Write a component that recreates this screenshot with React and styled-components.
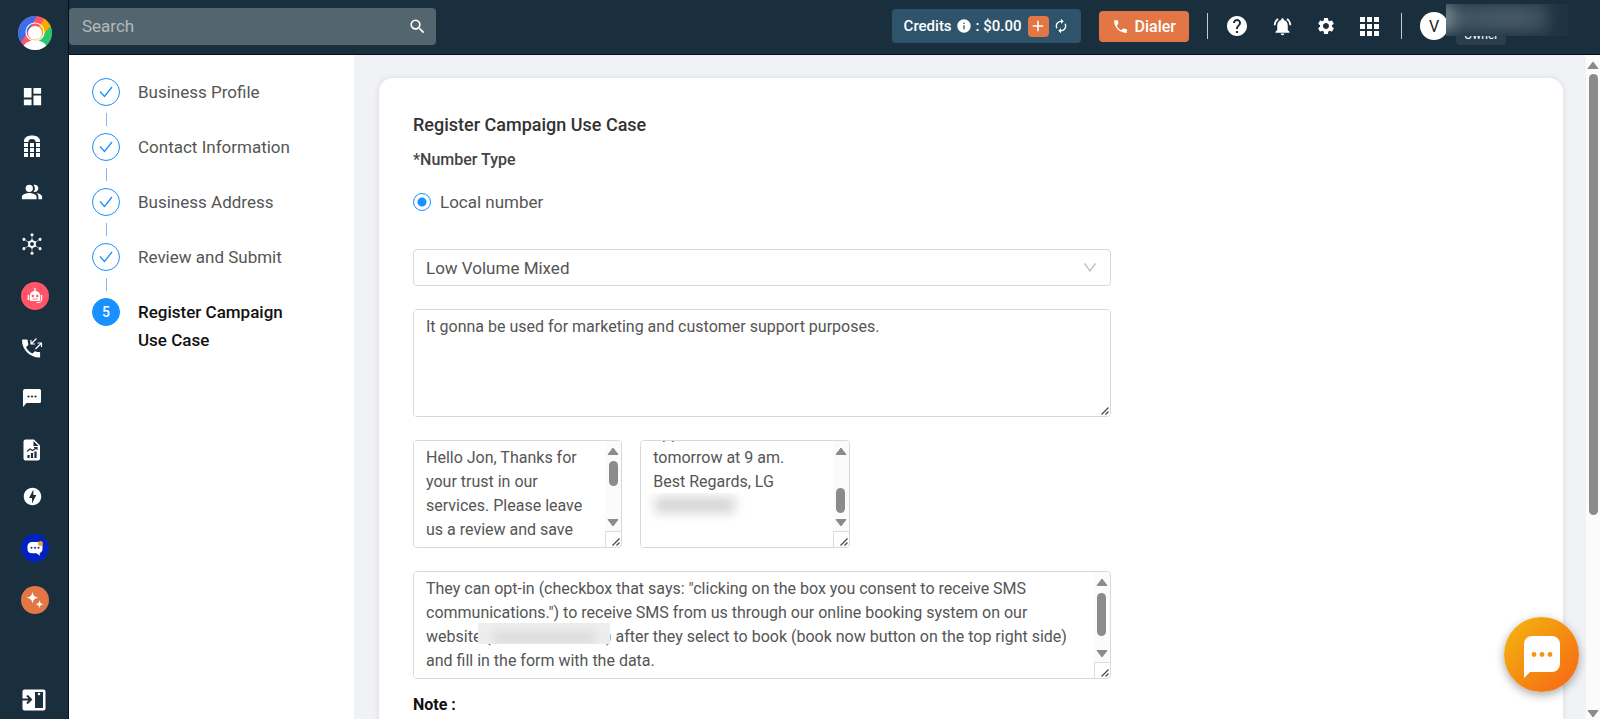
import { useEffect, useRef, useState } from "react";
import styled, { createGlobalStyle } from "styled-components";
import {
  MdAdd,
  MdAutorenew,
  MdDashboard,
  MdHelp,
  MdInfo,
  MdNotificationsActive,
  MdOfflineBolt,
  MdPeopleAlt,
  MdPhone,
  MdSearch,
  MdSettings,
} from "react-icons/md";

const steps = [
  { title: "Business Profile", done: true },
  { title: "Contact Information", done: true },
  { title: "Business Address", done: true },
  { title: "Review and Submit", done: true },
  { title: "Register Campaign Use Case", done: false },
];

const blank = "\u00a0".repeat(29);

const optInText =
  'They can opt-in (checkbox that says: "clicking on the box you consent to receive SMS communications.") to receive SMS from us through our online booking system on our website (' +
  blank +
  ") after they select to book (book now button on the top right side) and fill in the form with the data.";

const DeskPhoneIcon = () => (
  <svg width="18" height="22" viewBox="0 0 18 22" fill="#fff">
    <path d="M1 7C.5 2.500 4.500 0.500 9 0.500s8.500 2 8 6.500h-4.500c0-2-1-3-3.500-3s-3.500 1-3.500 3z" />
    {[8, 13, 18].map((y) =>
      [1, 7, 13].map((x) => <rect key={x + "-" + y} x={x} y={y} width="4" height="4" />)
    )}
  </svg>
);

const NetworkIcon = () => (
  <svg width="22" height="22" viewBox="0 0 22 22" fill="none" stroke="#fff">
    {[0, 60, 120, 180, 240, 300].map((a) => (
      <g key={a} transform={`rotate(${a} 11 11)`}>
        <path d="M11 7V2" strokeWidth="0.5" />
        <circle cx="11" cy="1.700" r="1.500" fill="#fff" stroke="none" />
        <path d="M11 8V6.500" strokeWidth="2" />
      </g>
    ))}
    <circle cx="11" cy="11" r="2.900" strokeWidth="1.900" />
  </svg>
);

const RobotIcon = () => (
  <svg width="28" height="28" viewBox="0 0 28 28">
    <circle cx="14" cy="14" r="14" fill="#ff5566" />
    <path d="M14 6v4" stroke="#fff" strokeWidth="1.400" />
    <path
      d="M9 18v-4.500c0-3 2-4.500 5-4.500s5 1.500 5 4.500V18c0 .6-.4 1-1 1h-8c-.6 0-1-.4-1-1z"
      fill="#fff"
    />
    <path d="M7.500 13v5M20.500 13v5" stroke="#fff" strokeWidth="1.600" />
    <path d="M20.500 18c0 2-1.500 2.600-5 2.600" fill="none" stroke="#fff" strokeWidth="1" />
    <circle cx="11.800" cy="14" r="1.200" fill="#ff5566" />
    <circle cx="16.200" cy="14" r="1.200" fill="#ff5566" />
    <path d="M11.500 17h5" stroke="#ff5566" strokeWidth="0.800" />
  </svg>
);

const CallsIcon = () => (
  <svg width="22" height="22" viewBox="0 0 22 22" fill="none">
    <path
      d="M2 2.500h3.700c.6 0 1 .4 1 1 0 1.300.2 2.500.6 3.600.1.400 0 .8-.3 1.100L5 10.200c1.400 2.800 3.700 5 6.500 6.400l2-2c.300-.3.700-.4 1.100-.2 1.100.4 2.300.6 3.500.6.600 0 1 .4 1 1v3.500c0 .6-.4 1-1 1C9 20.500 1 12.500 1 3.500c0-.6.400-1 1-1z"
      fill="#fff"
    />
    <path d="M15.500 1.500L10 7M10 3v4h4" stroke="#fff" strokeWidth="1.200" />
    <path d="M14.500 12l6-6M16.500 6h4v4" stroke="#fff" strokeWidth="1.200" />
  </svg>
);

const SmsIcon = () => (
  <svg width="20" height="20" viewBox="0 0 20 20">
    <path d="M3 1h14.500A1.500 1.500 0 0 1 19 2.500v11a1.500 1.500 0 0 1-1.500 1.500H4.500L1 19V3a2 2 0 0 1 2-2z" fill="#fff" />
    <circle cx="6.500" cy="8.500" r="1.100" fill="#1a2f3d" />
    <circle cx="10" cy="8.500" r="1.100" fill="#1a2f3d" />
    <circle cx="13.500" cy="8.500" r="1.100" fill="#1a2f3d" />
  </svg>
);

const ReportIcon = () => (
  <svg width="18" height="22" viewBox="0 0 18 22">
    <path d="M2.500.500H11l6 6v13a2 2 0 0 1-2 2H2.500a2 2 0 0 1-2-2v-17a2 2 0 0 1 2-2z" fill="#fff" />
    <path d="M10.500 2v5h5z" fill="#1a2f3d" />
    <path d="M5.500 19v-3M9 19v-5M12.500 19v-6.500" stroke="#1a2f3d" strokeWidth="2.200" />
    <path d="M4 12.500l3-2.500 2.500 1.500L13.500 9M11 8.600h3v2.500" fill="none" stroke="#1a2f3d" strokeWidth="1.100" />
  </svg>
);

const BubbleIcon = () => (
  <svg width="28" height="28" viewBox="0 0 28 28">
    <circle cx="14" cy="14" r="14" fill="#0022c4" />
    <path
      d="M11 8h6.500c2.300 0 4 1.800 4 4v3.300c0 1.800-1.200 3.200-2.900 3.700l.4 2.700-3.500-2.500H11c-2.500 0-4.500-1.500-4.500-4v-3.200c0-2.200 2-4 4.500-4z"
      fill="#fff"
    />
    <circle cx="10.500" cy="13.700" r="1" fill="#0022c4" />
    <circle cx="14" cy="13.700" r="1" fill="#0022c4" />
    <circle cx="17.500" cy="13.700" r="1" fill="#0022c4" />
    <circle cx="19.500" cy="9.500" r="2.500" fill="#f59a23" />
  </svg>
);

const SparkleIcon = () => (
  <svg width="28" height="28" viewBox="0 0 28 28">
    <circle cx="14" cy="14" r="14" fill="#e27645" />
    <path d="M11.500 5.500c.7 4.300 1.700 5.300 6 6.200-4.300.8-5.300 1.800-6 6.100-.7-4.300-1.700-5.300-6-6.100 4.300-.9 5.300-1.900 6-6.200z" fill="#fff" />
    <path d="M18.500 14c.5 3 1.200 3.700 4.200 4.300-3 .5-3.700 1.200-4.200 4.200-.5-3-1.200-3.700-4.200-4.200 3-.6 3.700-1.300 4.200-4.300z" fill="#fff" />
  </svg>
);

const ExpandIcon = () => (
  <svg width="24" height="22" viewBox="0 0 24 22">
    <rect x="0.500" y="0.500" width="23" height="21" rx="2" fill="#fff" />
    <path d="M0 10.500h8M5 6.500l4 4-4 4" fill="none" stroke="#1a2f3d" strokeWidth="2" />
    <rect x="13" y="3" width="8" height="16" fill="#1a2f3d" />
    <circle cx="17" cy="5" r="1.300" fill="#fff" />
  </svg>
);

const LogoIcon = () => (
  <svg width="34" height="34" viewBox="0 0 34 34">
    <defs>
      <clipPath id="logo-round">
        <circle cx="17" cy="17" r="17" />
      </clipPath>
    </defs>
    <g clipPath="url(#logo-round)">
      <rect width="34" height="34" fill="#ff5566" />
      <path d="M0 0h19L2 28H0z" fill="#3a6fe8" />
      <path d="M28 0h6v12L20 27l-8-3z" fill="#ffa800" />
      <path d="M34 8v26H20l-2-6z" fill="#28c76f" />
      <path d="M5 34c0-6 4-9.500 12-9.500S29 28 29 34z" fill="#fff" />
      <circle cx="17" cy="16" r="9" fill="none" stroke="#fff" strokeWidth="1.200" />
      <circle cx="17" cy="17" r="7" fill="#fff" />
      <path d="M15 23.500h6" stroke="#ffd9a8" strokeWidth="1.500" />
    </g>
  </svg>
);

const GridIcon = () => (
  <svg width="20" height="20" viewBox="0 0 20 20" fill="#fff">
    {[1, 8, 15].map((y) =>
      [1, 8, 15].map((x) => <rect key={x + "-" + y} x={x} y={y} width="5" height="5" />)
    )}
  </svg>
);

const ChatIcon = () => (
  <svg width="36" height="42" viewBox="0 0 36 42">
    <path d="M8 0h20a8 8 0 0 1 8 8v20a8 8 0 0 1-8 8H6l-6 6V8a8 8 0 0 1 8-8z" fill="#fff" />
    <circle cx="10" cy="18.500" r="2.400" fill="#f5960f" />
    <circle cx="18" cy="18.500" r="2.400" fill="#f5960f" />
    <circle cx="26" cy="18.500" r="2.400" fill="#f5960f" />
  </svg>
);

const CheckIcon = () => (
  <svg width="14" height="12" viewBox="0 0 14 12" fill="none">
    <path d="M1 5.500L5.500 10.500 13 1" stroke="#1890ff" strokeWidth="1.300" />
  </svg>
);

const ArrowUp = () => (
  <svg width="12" height="8" viewBox="0 0 12 8">
    <path d="M6 1L11 7.500H1z" fill="#8b8b8b" stroke="#8b8b8b" strokeLinejoin="round" />
  </svg>
);

const ArrowDown = () => (
  <svg width="12" height="8" viewBox="0 0 12 8">
    <path d="M6 7L11 .500H1z" fill="#8b8b8b" stroke="#8b8b8b" strokeLinejoin="round" />
  </svg>
);

const ResizeGrip = () => (
  <svg width="8" height="8" viewBox="0 0 8 8">
    <path d="M.500 7.500l7-7M4.500 7.500l3-3" stroke="#444" strokeWidth="1.200" />
  </svg>
);

const nav = [
  { label: "Dashboard", icon: <MdDashboard size={23} />, gap: 0 },
  { label: "Phone system", icon: <DeskPhoneIcon />, gap: 26 },
  { label: "Contacts", icon: <MdPeopleAlt size={22} />, gap: 22 },
  { label: "Integrations", icon: <NetworkIcon />, gap: 28 },
  { label: "AI agent", icon: <RobotIcon />, gap: 26 },
  { label: "Calls", icon: <CallsIcon />, gap: 26 },
  { label: "Messages", icon: <SmsIcon />, gap: 26 },
  { label: "Reports", icon: <ReportIcon />, gap: 28 },
  { label: "Automation", icon: <MdOfflineBolt size={21} />, gap: 22 },
  { label: "Live chat", icon: <BubbleIcon />, gap: 26 },
  { label: "AI tools", icon: <SparkleIcon />, gap: 24 },
];

// rows = space before thumb, thumb, space after thumb
const ScrollRail = ({ rows, wide }) => (
  <Rail $wide={wide} aria-hidden="true">
    <ArrowUp />
    <Track $rows={rows}>
      <Thumb />
    </Track>
    <ArrowDown />
  </Rail>
);

const MessageField = ({ label, text, rows, scroll, children }) => {
  const [value, setValue] = useState(text);
  const area = useRef(null);

  useEffect(() => {
    if (scroll) area.current.scrollTop = scroll;
  }, [scroll]);

  return (
    <Field>
      <TextArea
        ref={area}
        aria-label={label}
        value={value}
        onChange={(e) => setValue(e.target.value)}
        spellCheck={false}
      />
      {rows ? (
        <Side>
          <ScrollRail rows={rows} />
          <Corner>
            <ResizeGrip />
          </Corner>
        </Side>
      ) : (
        <Grip>
          <ResizeGrip />
        </Grip>
      )}
      {children}
    </Field>
  );
};

const TopBar = () => (
  <Header>
    <SearchBox>
      <SearchInput type="text" placeholder="Search" aria-label="Search" />
      <PlainButton aria-label="Run search">
        <MdSearch size={19} />
      </PlainButton>
    </SearchBox>
    <Actions>
      <Credits>
        Credits <MdInfo size={16} /> : $0.00
        <AddButton aria-label="Add credits">
          <MdAdd size={18} />
        </AddButton>
        <PlainButton aria-label="Refresh credits">
          <MdAutorenew size={16} />
        </PlainButton>
      </Credits>
      <DialerButton>
        <MdPhone size={17} />
        Dialer
      </DialerButton>
      <Divider />
      <Tools>
        <PlainButton aria-label="Help">
          <MdHelp size={24} />
        </PlainButton>
        <PlainButton aria-label="Notifications">
          <MdNotificationsActive size={21} />
        </PlainButton>
        <PlainButton aria-label="Settings">
          <MdSettings size={20} />
        </PlainButton>
        <PlainButton aria-label="Apps">
          <GridIcon />
        </PlainButton>
      </Tools>
      <Divider />
      <Profile>
        <Avatar>V</Avatar>
        <Role>Owner</Role>
        <NameMask />
      </Profile>
    </Actions>
  </Header>
);

const App = () => {
  const [useCase, setUseCase] = useState("Low Volume Mixed");

  return (
    <Shell>
      <GlobalStyle />
      <SideBar>
        <Logo href="#" aria-label="Home">
          <LogoIcon />
        </Logo>
        {nav.map((item) => (
          <NavLink key={item.label} href="#" aria-label={item.label} $gap={item.gap}>
            <NavIcon>{item.icon}</NavIcon>
          </NavLink>
        ))}
        <ExpandButton aria-label="Expand menu">
          <ExpandIcon />
        </ExpandButton>
      </SideBar>
      <Page>
        <TopBar />
        <Body>
          <StepList>
            {steps.map((step, i) => (
              <Step key={step.title}>
                <StepMark>
                  <StepCircle $done={step.done}>{step.done ? <CheckIcon /> : i + 1}</StepCircle>
                  {i < steps.length - 1 && <StepLine />}
                </StepMark>
                <StepTitle $done={step.done}>{step.title}</StepTitle>
              </Step>
            ))}
          </StepList>
          <Content>
            <Card>
              <Title>Register Campaign Use Case</Title>
              <Label>*Number Type</Label>
              <RadioLabel>
                <Radio type="radio" name="numberType" defaultChecked />
                Local number
              </RadioLabel>
              <Form>
                <SelectBox>
                  <Select
                    aria-label="Use case"
                    value={useCase}
                    onChange={(e) => setUseCase(e.target.value)}
                  >
                    <option>Low Volume Mixed</option>
                  </Select>
                  <Chevron>
                    <svg width="12" height="9" viewBox="0 0 12 9" fill="none">
                      <path d="M.500.500L6 8 11.500.500" stroke="#bfbfbf" strokeWidth="1.300" />
                    </svg>
                  </Chevron>
                </SelectBox>
                <MessageField
                  label="Description"
                  text="It gonna be used for marketing and customer support purposes."
                />
                <Samples>
                  <MessageField
                    label="Sample message 1"
                    text="Hello Jon, Thanks for your trust in our services. Please leave us a review and save"
                    rows="6fr 24fr 32fr"
                  />
                  <MessageField
                    label="Sample message 2"
                    text={"appointment\ntomorrow at 9 am.\nBest Regards, LG\n\n"}
                    rows="32fr 24fr 6fr"
                    scroll={24}
                  >
                    <SignatureMask />
                  </MessageField>
                </Samples>
                <MessageField label="Opt-in description" text={optInText} rows="7fr 41fr 14fr">
                  <SiteMask />
                </MessageField>
              </Form>
              <Note>Note :</Note>
            </Card>
          </Content>
          <ScrollRail rows="5fr 439fr 194fr" wide />
        </Body>
      </Page>
      <ChatButton aria-label="Open chat">
        <ChatIcon />
      </ChatButton>
    </Shell>
  );
};

const GlobalStyle = createGlobalStyle`
  *{
    box-sizing:border-box;
  }
  body{
    margin:0;
    font-family:Roboto, "Liberation Sans", sans-serif;
    font-size:16px;
    color:#555;
  }
  button, input, select, textarea{
    font:inherit;
    color:inherit;
  }
  button{
    border:none;
    padding:0;
    cursor:pointer;
  }
  svg{
    display:block;
    flex-shrink:0;
  }
`

const Shell = styled.div`
  display:flex;
  height:100vh;
  overflow:hidden;
  background-color:#1a2f3d;
`

const SideBar = styled.nav`
  display:flex;
  flex-direction:column;
  width:69px;
  flex-shrink:0;
  padding:16px 0 8px 18px;
  border-right:1px solid #05101a;
  color:white;
`

const Logo = styled.a`
  width:34px;
  margin-bottom:34px;
`

const NavLink = styled.a`
  display:flex;
  margin-top:${(props)=>props.$gap}px;
  padding-left:3px;
  color:white;
`

const NavIcon = styled.span`
  display:flex;
  align-items:center;
  justify-content:center;
  min-width:22px;
  min-height:24px;
`

const ExpandButton = styled.button`
  width:24px;
  margin-top:auto;
  margin-left:4px;
  background:none;
`

const Page = styled.div`
  display:flex;
  flex-direction:column;
  flex:1;
  min-width:0;
`

const Header = styled.header`
  display:flex;
  align-items:center;
  justify-content:space-between;
  height:55px;
  flex-shrink:0;
  padding-bottom:2px;
  border-bottom:1px solid #05101a;
  color:white;
`

const SearchBox = styled.div`
  display:flex;
  align-items:center;
  width:24%;
  height:37px;
  padding:0 9px 0 13px;
  background-color:#53666f;
  border-radius:4px;
`

const SearchInput = styled.input`
  flex:1;
  min-width:0;
  padding:0;
  border:none;
  outline:none;
  background:none;
  font-size:17px;

  &::placeholder{
    color:#b5b8ba;
  }
`

const PlainButton = styled.button`
  display:flex;
  background:none;
  color:white;
`

const Actions = styled.div`
  display:flex;
  align-items:center;
`

const Credits = styled.div`
  display:flex;
  align-items:center;
  gap:4px;
  height:34px;
  padding:0 12px;
  background-color:#2e536b;
  border-radius:4px;
  font-size:15px;
  font-weight:500;
`

const AddButton = styled.button`
  display:flex;
  align-items:center;
  justify-content:center;
  width:21px;
  height:21px;
  margin-left:2px;
  background-color:#e27645;
  border-radius:4px;
  color:white;
`

const DialerButton = styled.button`
  display:flex;
  align-items:center;
  gap:6px;
  height:31px;
  margin:0 18px;
  padding:0 13px;
  background-color:#e27645;
  border-radius:4px;
  color:white;
  font-weight:500;
`

const Divider = styled.span`
  width:1px;
  height:26px;
  background-color:#c4cacd;
`

const Tools = styled.div`
  display:flex;
  align-items:center;
  gap:23px;
  padding:0 22px 0 17px;
`

const Profile = styled.div`
  position:relative;
  display:flex;
  align-items:center;
  width:180px;
  margin-left:18px;
`

const Avatar = styled.span`
  display:flex;
  align-items:center;
  justify-content:center;
  width:28px;
  height:28px;
  border-radius:50%;
  background-color:white;
  color:#222;
`

const Role = styled.span`
  margin:18px 0 0 8px;
  padding:0 8px;
  background-color:#2a3f4b;
  border-radius:4px;
  font-size:12px;
  line-height:20px;
`

const NameMask = styled.span`
  position:absolute;
  left:26px;
  top:-3px;
  width:122px;
  height:32px;
  overflow:hidden;
  background-color:#1f3442;

  &::before{
    content:"";
    position:absolute;
    inset:0 20px 4px -10px;
    background:linear-gradient(90deg, #82919a 8%, #40545f 20%, #465964 70%, #3a4e5a 100%);
    filter:blur(7px);
  }
`

const Body = styled.div`
  display:flex;
  flex:1;
  min-height:0;
  background-color:#f0f2f6;
`

const StepList = styled.ol`
  width:285px;
  flex-shrink:0;
  margin:0;
  padding:23px;
  list-style:none;
  background-color:white;
`

const Step = styled.li`
  display:flex;
  gap:18px;
`

const StepMark = styled.div`
  display:flex;
  flex-direction:column;
  align-items:center;
`

const StepCircle = styled.span`
  display:flex;
  align-items:center;
  justify-content:center;
  width:28px;
  height:28px;
  border:1px solid #1890ff;
  border-radius:50%;
  background-color:${(props)=>props.$done ? "white" : "#1890ff"};
  color:white;
  font-size:14px;
  font-weight:500;
`

const StepLine = styled.span`
  width:1px;
  height:13px;
  margin:7px 0;
  background-color:#8ab4f0;
`

const StepTitle = styled.span`
  width:170px;
  font-size:17px;
  line-height:28px;
  color:${(props)=>props.$done ? "#555" : "#111"};
  font-weight:${(props)=>props.$done ? 400 : 500};
`

const Content = styled.main`
  flex:1;
  min-width:0;
  padding:23px 23px 0 25px;
  overflow:hidden;
`

const Card = styled.section`
  min-height:900px;
  padding:35px 34px;
  background-color:white;
  border-radius:14px;
  box-shadow:0 0 6px rgba(0,0,0,0.1);
`

const Title = styled.h1`
  margin:0;
  font-size:18px;
  font-weight:500;
  line-height:24px;
  color:#333;
`

const Label = styled.div`
  margin-top:11px;
  font-weight:500;
  line-height:24px;
  color:#444;
`

const RadioLabel = styled.label`
  display:flex;
  align-items:center;
  gap:9px;
  margin-top:18px;
  font-size:17px;
  line-height:24px;
`

const Radio = styled.input`
  appearance:none;
  width:18px;
  height:18px;
  margin:0;
  border:1px solid #1890ff;
  border-radius:50%;
  background:radial-gradient(circle, #1890ff 4px, white 5px);
`

const Form = styled.div`
  display:flex;
  flex-direction:column;
  gap:23px;
  width:62.5%;
  margin-top:35px;
`

const SelectBox = styled.div`
  position:relative;
`

const Select = styled.select`
  display:block;
  appearance:none;
  width:100%;
  height:37px;
  padding:0 12px;
  border:1px solid #d9d9d9;
  border-radius:4px;
  outline:none;
  background-color:white;
  font-size:17px;
`

const Chevron = styled.span`
  position:absolute;
  right:15px;
  top:14px;
  pointer-events:none;
`

const Field = styled.div`
  position:relative;
  display:flex;
  height:108px;
  border:1px solid #d9d9d9;
  border-radius:4px;
  overflow:hidden;
`

const TextArea = styled.textarea`
  flex:1;
  min-width:0;
  padding:5px 12px;
  border:none;
  outline:none;
  resize:none;
  line-height:24px;
  background-color:white;
`

const Samples = styled.div`
  display:grid;
  grid-template-columns:30% 30%;
  gap:18px;
`

const Side = styled.div`
  display:flex;
  flex-direction:column;
  width:16px;
`

const Corner = styled.span`
  display:flex;
  align-items:flex-end;
  justify-content:flex-end;
  width:16px;
  height:16px;
  padding:1px;
  border-top:1px solid #ddd;
  border-left:1px solid #ddd;
`

const Grip = styled.span`
  position:absolute;
  right:1px;
  bottom:1px;
`

const Rail = styled.div`
  display:flex;
  flex-direction:column;
  align-items:center;
  flex:${(props)=>props.$wide ? "none" : 1};
  width:${(props)=>props.$wide ? 14 : 16}px;
  padding:${(props)=>props.$wide ? "6px 0 1px" : "6px 0 4px"};
  background-color:#fbfbfb;
`

const Track = styled.div`
  display:grid;
  grid-template-rows:${(props)=>props.$rows};
  flex:1;
  width:9px;
`

const Thumb = styled.div`
  grid-row:2;
  border-radius:5px;
  background-color:#8b8b8b;
`

const SignatureMask = styled.span`
  position:absolute;
  left:4px;
  top:52px;
  width:116px;
  height:28px;
  overflow:hidden;
  background-color:white;

  &::before{
    content:"";
    position:absolute;
    inset:4px 26px 8px 10px;
    background-color:#d4d4d4;
    filter:blur(6px);
  }
`

const SiteMask = styled.span`
  position:absolute;
  left:64px;
  top:51px;
  width:132px;
  height:21px;
  overflow:hidden;
  background-color:#ededed;

  &::before{
    content:"";
    position:absolute;
    inset:10px 16px 2px 16px;
    background-color:#d8d8d8;
    filter:blur(4px);
  }
`

const Note = styled.div`
  margin-top:14px;
  font-weight:700;
  line-height:24px;
  color:#111;
`

const ChatButton = styled.button`
  position:fixed;
  right:21px;
  bottom:27px;
  display:flex;
  align-items:center;
  justify-content:center;
  width:75px;
  height:75px;
  padding-top:4px;
  border-radius:50%;
  background:linear-gradient(135deg, #f3b010 10%, #f66c14 90%);
  box-shadow:0 3px 10px rgba(0,0,0,0.35);
`

export default App;
